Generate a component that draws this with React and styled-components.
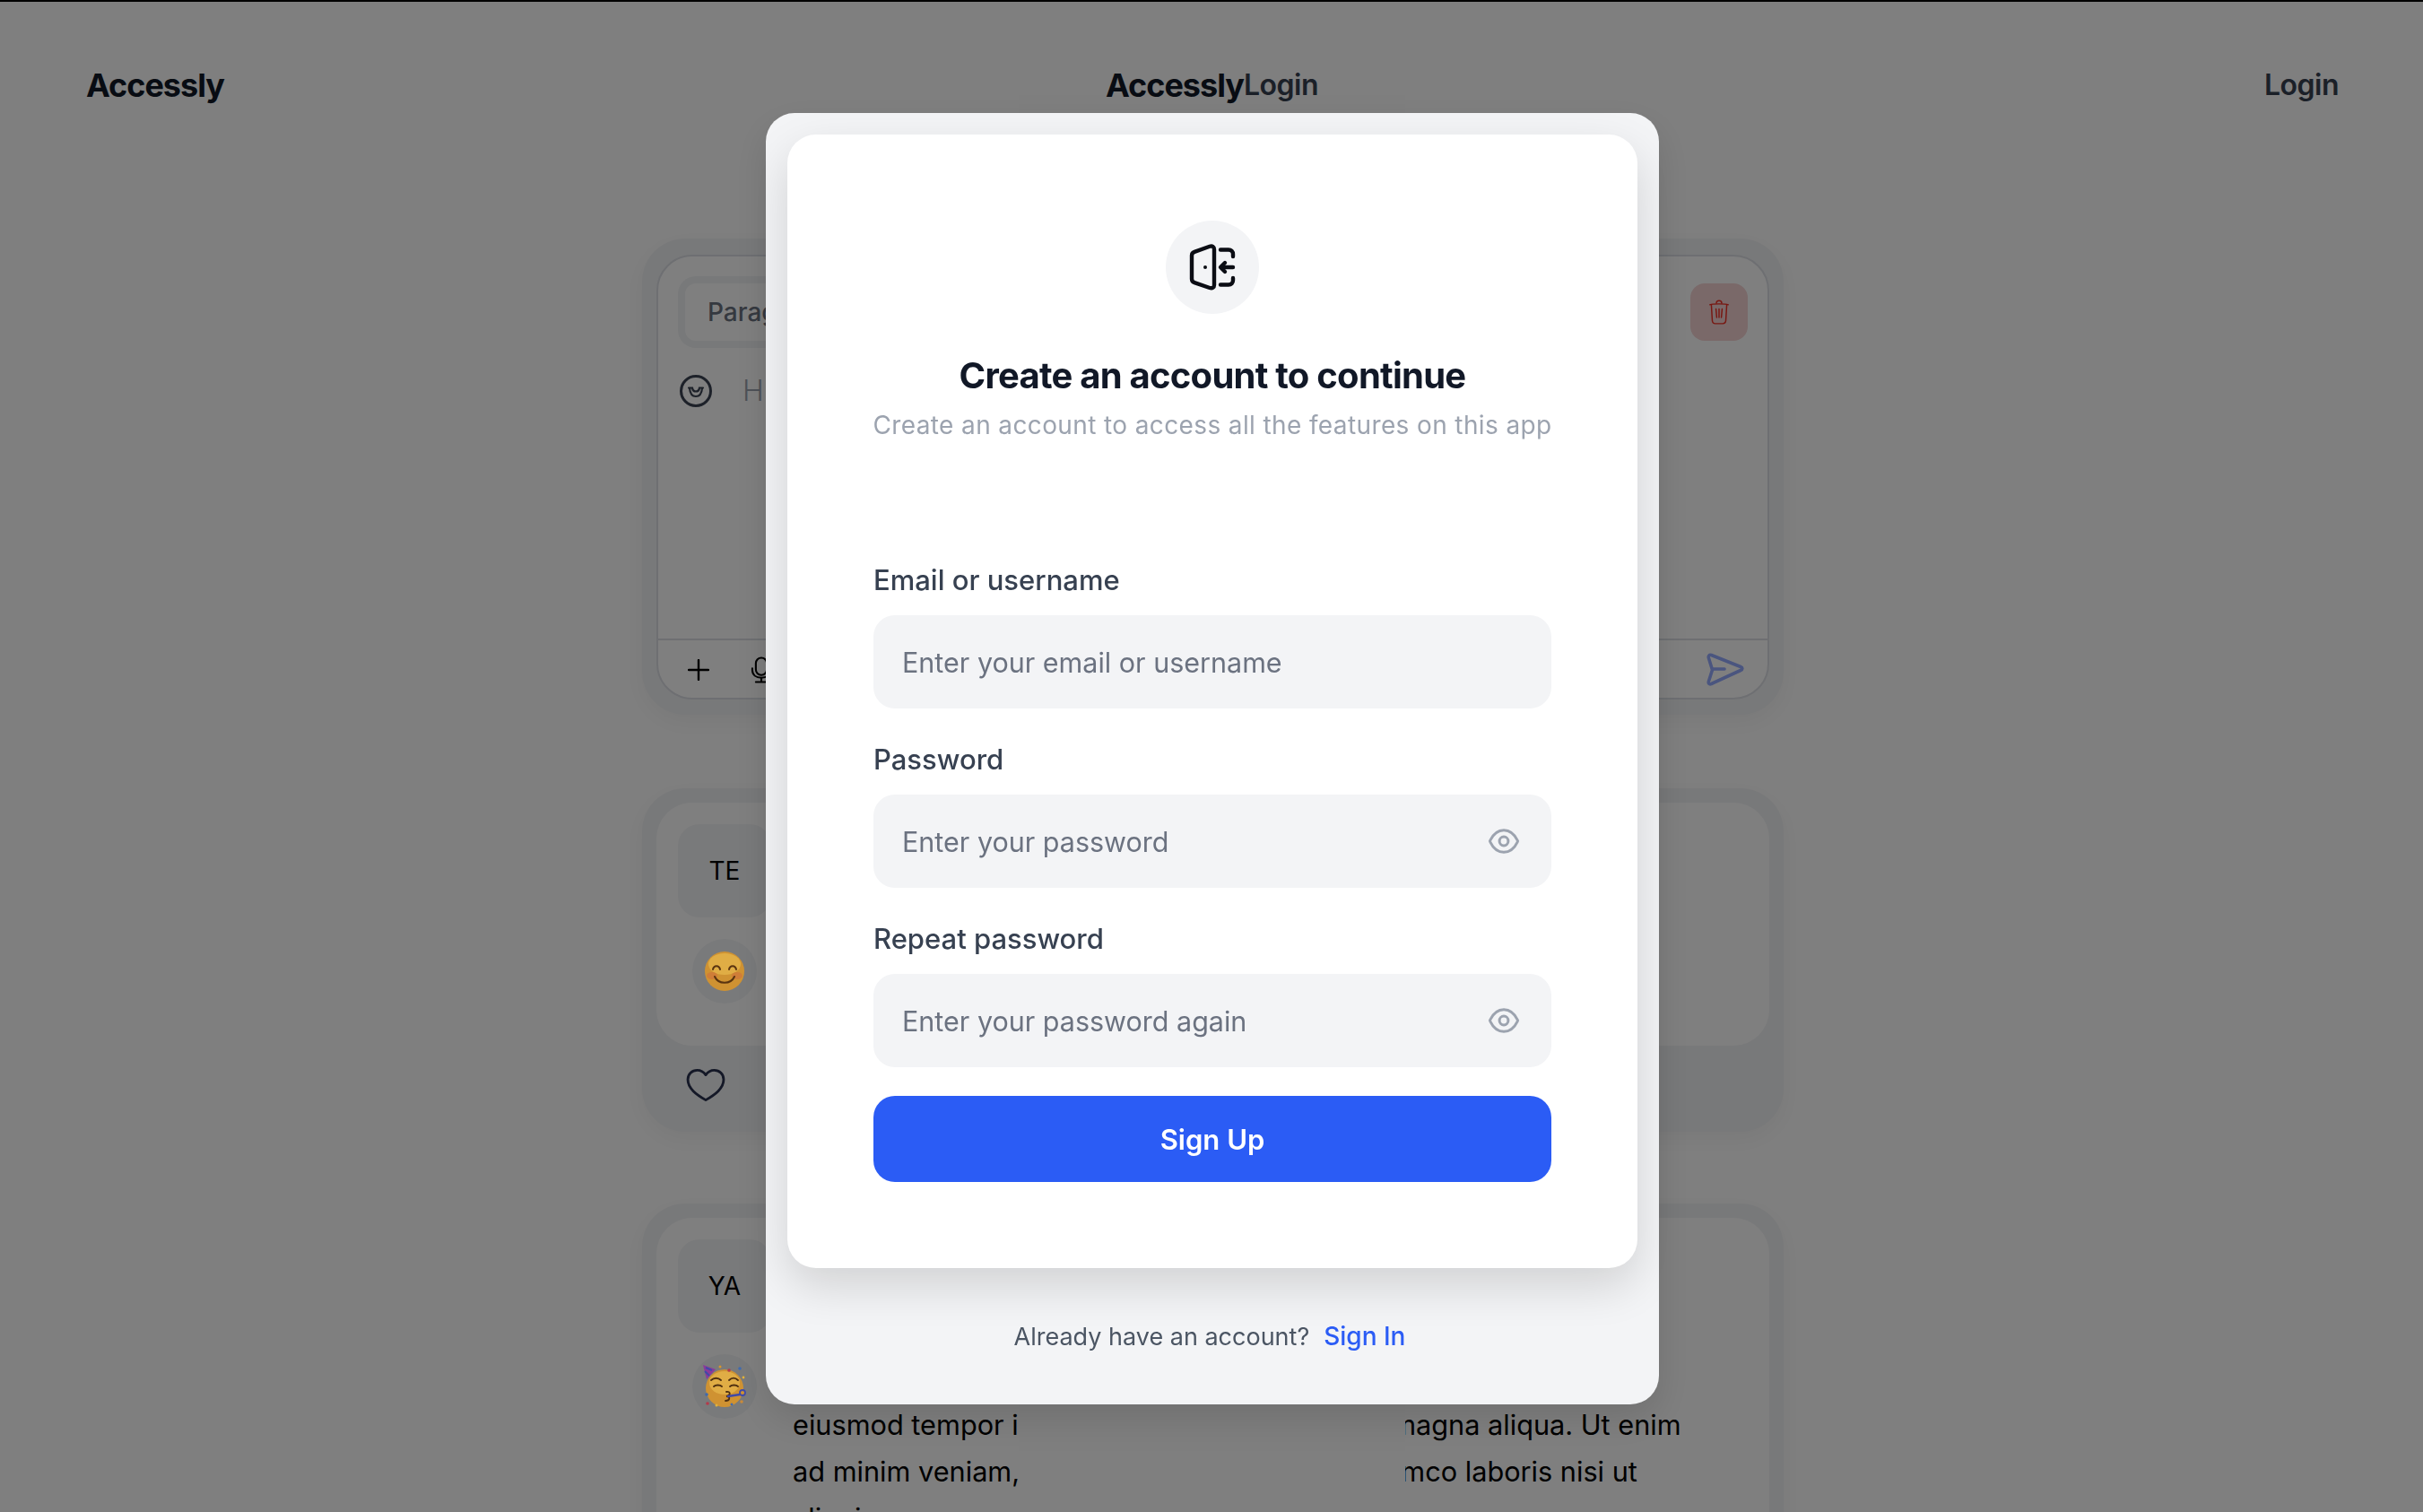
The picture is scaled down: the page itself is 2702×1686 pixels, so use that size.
import styled, { createGlobalStyle } from "styled-components";

const GlobalStyle = createGlobalStyle`
  html, body {
    margin: 0;
    padding: 0;
    height: 100%;
    overflow: hidden;
    background: #fff;
    font-family: Inter, "Liberation Sans", sans-serif;
  }
  * {
    box-sizing: border-box;
  }
`;

const EyeIcon = () => (
  <svg width="42" height="42" viewBox="0 0 24 24" fill="none" stroke="#9ca3af" strokeWidth="1.7">
    <path d="M3.300 12.500c-.3-.4-.3-.7 0-1C5.200 7.600 8.400 5 12 5s6.800 2.600 8.700 6.500c.3.3.3.6 0 1C18.800 16.400 15.600 19 12 19s-6.800-2.600-8.700-6.500Z" />
    <circle cx="12" cy="12" r="2.800" />
  </svg>
);

const DoorIcon = () => (
  <svg width="56" height="56" viewBox="0 0 56 56" fill="none" stroke="#0b0d14" strokeWidth="4.400" strokeLinecap="round" strokeLinejoin="round">
    <path d="M5 15c0-2 1-3.500 3-4.200L25 4.800c3-1 5 .5 5 3.200v39.800c0 2.700-2 4.200-5 3.200L8 45.200c-2-.7-3-2.200-3-4.200Z" />
    <path d="M37 8.500h9c3 0 5 2 5 5V16" />
    <path d="M37 47.500h9c3 0 5-2 5-5V40" />
    <path d="M51 28H38" />
    <path d="M42 23l-5 5 5 5" />
    <circle cx="20" cy="28" r="2" fill="#0b0d14" stroke="none" />
  </svg>
);

const TrashIcon = () => (
  <svg width="24" height="32" viewBox="0 0 28 34" fill="none" stroke="#f02e22" strokeWidth="1.700" strokeLinecap="round" strokeLinejoin="round">
    <path d="M2 7.500c4-1.500 20-1.500 24 0" />
    <path d="M10.500 5.500c0-4.500 7-4.500 7 0" />
    <path d="M4 8l1.200 20c.2 2.500 1.500 4 4 4h9.600c2.500 0 3.800-1.500 4-4L24 8" />
    <path d="M10 13l1 11M14 13v11M18 13l-1 11" />
  </svg>
);

const SmileIcon = () => (
  <svg width="38" height="38" viewBox="0 0 38 38" fill="none" stroke="#3a4352" strokeWidth="3" strokeLinecap="round">
    <circle cx="19" cy="19" r="16.500" />
    <path d="M11 15.500h4c.3 2.500 1.700 4 4 4s3.700-1.500 4-4h4" strokeWidth="2.200" />
    <path d="M12 16c.5 6 3 9 7 9s6.500-3 7-9" strokeWidth="2.200" />
  </svg>
);

const PlusIcon = () => (
  <svg width="24" height="24" viewBox="0 0 24 24" fill="none" stroke="#000" strokeWidth="2.400" strokeLinecap="round">
    <path d="M1 12h22M12 1v22" />
  </svg>
);

const MicIcon = () => (
  <svg width="28" height="30" viewBox="0 0 32 34" fill="none" stroke="#000" strokeWidth="2.400" strokeLinecap="round">
    <rect x="9" y="1.500" width="14" height="22" rx="7" />
    <path d="M4.500 15v2c0 6.500 5 10 11.500 10s11.500-3.500 11.500-10v-2" />
    <path d="M16 27v5M9 32.500h14" />
  </svg>
);

const SendIcon = () => (
  <svg width="42" height="38" viewBox="0 0 42 38" fill="none" stroke="#94aaff" strokeWidth="3.600" strokeLinecap="round" strokeLinejoin="round">
    <path d="M5.500 2.500 38 15.500c2.500 1 2.500 3 0 4L5.500 34.500c-2.500 1-3.800-.5-3-3L6.500 19 2.500 6c-.8-2.500.5-4.300 3-3.500Z" />
    <path d="M7 18h13" />
  </svg>
);

const HeartIcon = () => (
  <svg width="44" height="38" viewBox="0 0 46 40" fill="none" stroke="#28304e" strokeWidth="3" strokeLinejoin="round">
    <path d="M23 37.500C12 31 2 24 2 13.500 2 7 7 2.500 13 2.500c4 0 7.500 2 10 5.500 2.500-3.500 6-5.500 10-5.500 6 0 11 4.500 11 11 0 10.500-10 17.500-21 24Z" />
  </svg>
);

const SmileEmoji = () => (
  <EmojiArt width="46" height="46" viewBox="0 0 46 46">
    <circle cx="23" cy="23" r="22" fill="#cf9232" />
    <ellipse cx="23" cy="15" rx="18" ry="12" fill="#e0ad45" />
    <ellipse cx="9" cy="28" rx="6" ry="4" fill="#cf6f3c" opacity="0.6" />
    <ellipse cx="37" cy="28" rx="6" ry="4" fill="#cf6f3c" opacity="0.6" />
    <path d="M10 21c1-5 7-5 8 0M28 21c1-5 7-5 8 0M12 29c4 9 18 9 22 0" fill="none" stroke="#5a3410" strokeWidth="2" strokeLinecap="round" />
  </EmojiArt>
);

const PartyEmoji = () => (
  <EmojiArt width="60" height="60" viewBox="10 10 60 60">
    <circle cx="40" cy="42" r="21" fill="#cf9232" />
    <ellipse cx="40" cy="36" rx="17" ry="13" fill="#e0ad45" />
    <path d="M16 16 30 21 20 32Z" fill="#8b3a9a" />
    <path d="M19 19 26 22M18 23 23 28" stroke="#3f4aa8" strokeWidth="2" />
    <path d="M25 33c3-3 8-3 11 0M45 33c3-3 7-3 10 0M28 40c2-2 7-2 9 0M46 40c2-2 7-2 9 0" fill="none" stroke="#4e2f10" strokeWidth="1.800" strokeLinecap="round" />
    <path d="M42 46c5-1 5 4 0 5 5 0 4 5-1 5" fill="none" stroke="#4e2f10" strokeWidth="1.800" strokeLinecap="round" />
    <path d="M44 51 57 49" stroke="#3f4aa8" strokeWidth="2.400" strokeLinecap="round" />
    <circle cx="60" cy="47" r="3" fill="#cf9232" stroke="#3f4aa8" strokeWidth="1.800" />
    <circle cx="57" cy="20" r="1.800" fill="#3f6ab0" />
    <circle cx="45" cy="22" r="1.800" fill="#b5394a" />
    <circle cx="35" cy="18" r="1.500" fill="#d9962b" />
    <circle cx="61" cy="30" r="1.400" fill="#e2b23a" />
    <circle cx="20" cy="49" r="1.800" fill="#3f6ab0" />
    <circle cx="21" cy="59" r="1.800" fill="#b5394a" />
    <circle cx="31" cy="61" r="1.500" fill="#e2b23a" />
    <circle cx="48" cy="60" r="1.500" fill="#3f6ab0" />
    <circle cx="59" cy="57" r="1.800" fill="#c98a3a" />
  </EmojiArt>
);

const App = () => {
  return (
    <Page>
      <GlobalStyle />
      <Nav>
        <Brand>Accessly</Brand>
        <NavLink>Login</NavLink>
      </Nav>

      <Feed>
        <Shell $top={18} $bottom={17}>
          <EditorCard>
            <EditorHead>
              <FormatSelect>Paragraph</FormatSelect>
              <DeleteButton>
                <TrashIcon />
              </DeleteButton>
            </EditorHead>
            <EditorBody>
              <SmileIcon />
              <Placeholder>Hello</Placeholder>
            </EditorBody>
            <EditorFoot>
              <FootTools>
                <PlusIcon />
                <MicIcon />
              </FootTools>
              <SendIcon />
            </EditorFoot>
          </EditorCard>
        </Shell>

        <Shell $gap={82}>
          <PostCard $height={271}>
            <Avatar>TE</Avatar>
            <EmojiBadge>
              <SmileEmoji />
            </EmojiBadge>
          </PostCard>
          <PostFoot>
            <HeartIcon />
          </PostFoot>
        </Shell>

        <Shell $gap={80}>
          <PostCard>
            <Avatar>YA</Avatar>
            <PostRow>
              <EmojiBadge>
                <PartyEmoji />
              </EmojiBadge>
              <PostText>
                Lorem ipsum dolor sit amet, consectetur adipiscing elit, sed do eiusmod tempor
                incididunt ut labore et dolore magna aliqua. Ut enim ad minim veniam, quis
                nostrud exercitation ullamco laboris nisi ut aliquip ex ea commodo consequat.
              </PostText>
            </PostRow>
          </PostCard>
        </Shell>
      </Feed>

      <CenterStrip>
        <Brand>Accessly</Brand>
        <NavLink>Login</NavLink>
      </CenterStrip>

      <Overlay>
        <Modal>
          <ModalCard>
            <IconCircle>
              <DoorIcon />
            </IconCircle>
            <Title>Create an account to continue</Title>
            <Subtitle>Create an account to access all the features on this app</Subtitle>
            <Form>
              <Label>Email or username</Label>
              <Field>
                <Input placeholder="Enter your email or username" />
              </Field>
              <Label>Password</Label>
              <Field>
                <Input placeholder="Enter your password" />
                <EyeIcon />
              </Field>
              <Label>Repeat password</Label>
              <Field>
                <Input placeholder="Enter your password again" />
                <EyeIcon />
              </Field>
              <SubmitButton type="button">Sign Up</SubmitButton>
            </Form>
          </ModalCard>
          <ModalFoot>
            Already have an account?
            <SignIn>Sign In</SignIn>
          </ModalFoot>
        </Modal>
      </Overlay>
    </Page>
  );
};

export default App;

const Page = styled.div`
  height: 1686px;
  overflow: hidden;
  border-top: 2px solid #000;
  background: #fff;
`;

const Nav = styled.nav`
  height: 264px;
  padding: 69px 94px 0 96px;
  display: flex;
  justify-content: space-between;
  align-items: flex-start;
`;

const Brand = styled.span`
  font-size: 36px;
  line-height: 48px;
  font-weight: 700;
  letter-spacing: -1px;
  color: #111827;
`;

const NavLink = styled.span`
  font-size: 32px;
  line-height: 48px;
  font-weight: 600;
  letter-spacing: -0.5px;
  color: #374151;
`;

const Feed = styled.main`
  width: 1273px;
  margin-left: 716px;
  display: flex;
  flex-direction: column;
`;

const Shell = styled.section`
  margin-top: ${(p) => p.$gap ?? 0}px;
  padding: ${(p) => p.$top ?? 16}px 16px ${(p) => p.$bottom ?? 0}px;
  border-radius: 48px;
  background: #f1f2f4;
  box-shadow: 0 8px 28px rgba(0, 0, 0, 0.05);
`;

const EditorCard = styled.div`
  height: 496px;
  display: flex;
  flex-direction: column;
  border: 2px solid #dcdfe5;
  border-radius: 40px;
  background: #fff;
`;

const EditorHead = styled.div`
  padding: 22px 22px 0;
  display: flex;
  justify-content: space-between;
  align-items: center;
`;

const FormatSelect = styled.div`
  width: 220px;
  height: 80px;
  padding-left: 33px;
  display: flex;
  align-items: center;
  border-radius: 20px;
  background: #fff;
  box-shadow: inset 0 0 0 8px #f1f2f4;
  font-size: 28px;
  font-weight: 500;
  color: #6b7280;
`;

const DeleteButton = styled.div`
  width: 64px;
  height: 64px;
  display: flex;
  align-items: center;
  justify-content: center;
  border-radius: 16px;
  background: #f4d2d2;
`;

const EditorBody = styled.div`
  flex: 1;
  padding: 29px 26px 0 23px;
  display: flex;
  align-items: flex-start;
  gap: 33px;
`;

const Placeholder = styled.span`
  font-size: 32px;
  font-weight: 300;
  line-height: 38px;
  letter-spacing: 3px;
  color: #9ca3af;
`;

const EditorFoot = styled.div`
  height: 66px;
  padding: 2px 26px 0 33px;
  display: flex;
  justify-content: space-between;
  align-items: center;
  border-top: 2px solid #dcdfe5;
`;

const FootTools = styled.div`
  display: flex;
  align-items: center;
  gap: 44px;
`;

const PostCard = styled.div`
  height: ${(p) => (p.$height ? `${p.$height}px` : "auto")};
  padding: 24px;
  border-radius: 40px;
  background: #fff;
`;

const Avatar = styled.div`
  width: 104px;
  height: 104px;
  display: flex;
  align-items: center;
  justify-content: center;
  border-radius: 24px;
  background: #f3f4f6;
  font-size: 28px;
  color: #000;
`;

const EmojiBadge = styled.div`
  width: 72px;
  height: 72px;
  margin: 24px 0 0 16px;
  flex-shrink: 0;
  display: flex;
  align-items: center;
  justify-content: center;
  border-radius: 50%;
  background: #f3f4f6;
`;

const EmojiArt = styled.svg`
  position: relative;
  z-index: 2;
  flex-shrink: 0;
`;

const PostRow = styled.div`
  display: flex;
  gap: 40px;
`;

const PostText = styled.p`
  width: 1016px;
  margin: 25px 0 0;
  font-size: 30.7px;
  line-height: 52px;
  color: #000;
`;

const PostFoot = styled.div`
  height: 96px;
  padding: 0 0 9px 33px;
  display: flex;
  align-items: center;
`;

const CenterStrip = styled.div`
  position: fixed;
  top: 2px;
  left: 1136px;
  bottom: 0;
  width: 431px;
  padding-top: 69px;
  display: flex;
  justify-content: center;
  align-items: flex-start;
  background: #fff;
`;

const Overlay = styled.div`
  position: fixed;
  z-index: 1;
  top: 2px;
  left: 0;
  right: 0;
  bottom: 0;
  padding: 124px 0 0 854px;
  background: rgba(0, 0, 0, 0.5);
`;

const Modal = styled.div`
  width: 996px;
  padding: 24px 24px 0;
  border-radius: 32px;
  background: #f3f4f6;
  box-shadow: 0 16px 40px rgba(0, 0, 0, 0.12);
`;

const ModalCard = styled.div`
  height: 1264px;
  padding: 96px 96px 0;
  display: flex;
  flex-direction: column;
  align-items: center;
  border-radius: 32px;
  background: #fff;
  box-shadow: 0 20px 50px rgba(0, 0, 0, 0.14);
`;

const IconCircle = styled.div`
  width: 104px;
  height: 104px;
  display: flex;
  align-items: center;
  justify-content: center;
  border-radius: 50%;
  background: #f3f4f6;
`;

const Title = styled.h2`
  margin: 41px 0 0;
  font-size: 40px;
  line-height: 56px;
  font-weight: 700;
  letter-spacing: -0.75px;
  color: #111827;
  white-space: nowrap;
`;

const Subtitle = styled.p`
  margin: 7px 0 0;
  font-size: 28px;
  line-height: 40px;
  letter-spacing: 0.38px;
  color: #9ca3af;
  white-space: nowrap;
`;

const Form = styled.form`
  width: 100%;
  margin-top: 133px;
  display: flex;
  flex-direction: column;
`;

const Label = styled.label`
  margin-bottom: 19px;
  font-size: 31px;
  line-height: 40px;
  font-weight: 500;
  color: #374151;
`;

const Field = styled.div`
  height: 104px;
  margin-bottom: 37px;
  padding: 0 32px;
  display: flex;
  align-items: center;
  border-radius: 24px;
  background: #f3f4f6;
`;

const Input = styled.input`
  flex: 1;
  min-width: 0;
  padding: 0;
  border: 0;
  outline: 0;
  background: transparent;
  font-family: inherit;
  font-size: 30.5px;
  color: #111827;

  &::placeholder {
    color: #6b7280;
    opacity: 1;
  }
`;

const SubmitButton = styled.button`
  height: 96px;
  margin-top: -5px;
  border: 0;
  border-radius: 24px;
  background: #2b5cf5;
  font-family: inherit;
  font-size: 31px;
  font-weight: 600;
  color: #fff;
`;

const ModalFoot = styled.div`
  height: 152px;
  padding-right: 6px;
  display: flex;
  align-items: center;
  justify-content: center;
  font-size: 27px;
  color: #4b5563;
`;

const SignIn = styled.span`
  margin-left: 16px;
  font-size: 28px;
  font-weight: 500;
  color: #2b5cf5;
`;
